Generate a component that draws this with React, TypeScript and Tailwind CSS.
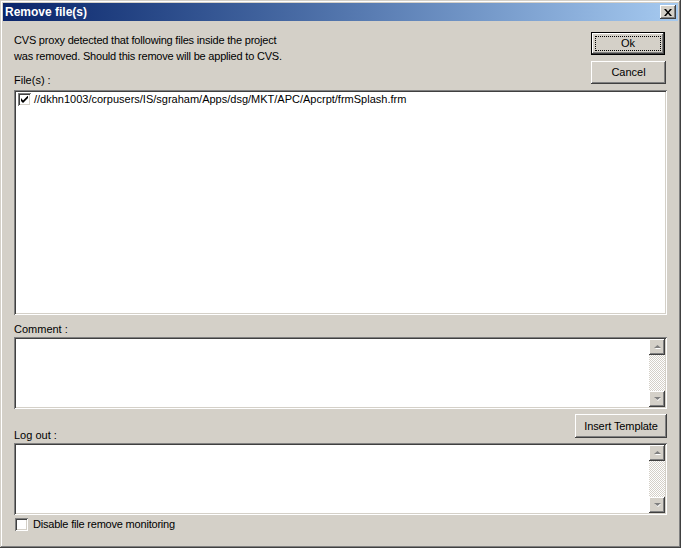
import React, { useState } from "react";

const font = "font-['Tahoma','Liberation_Sans',sans-serif]";

// classic 3D bevels done with stacked inset shadows
const raised =
  "bg-[#d4d0c8] shadow-[inset_-1px_-1px_#404040,inset_1px_1px_#fff,inset_-2px_-2px_#808080,inset_2px_2px_#d4d0c8]";
const sunken =
  "bg-white shadow-[inset_1px_1px_#808080,inset_-1px_-1px_#fff,inset_2px_2px_#404040,inset_-2px_-2px_#d4d0c8]";

const ArrowButton: React.FC<{ dir: "up" | "down" }> = ({ dir }) => (
  <div className={`w-[16px] h-[16px] flex items-center justify-center ${raised}`}>
    <svg width="7" height="4" viewBox="0 0 7 4">
      {dir === "up" ? (
        <>
          <path d="M1 4 L4 1 L7 4 Z" fill="#fff" />
          <path d="M0 3 L3.5 0 L7 3 Z" fill="#808080" />
        </>
      ) : (
        <>
          <path d="M1 1 L4 4 L7 1 Z" fill="#fff" />
          <path d="M0 0 L3.5 3 L7 0 Z" fill="#808080" />
        </>
      )}
    </svg>
  </div>
);

const TextArea: React.FC = () => (
  <div className={`h-[72px] p-[2px] flex ${sunken}`}>
    <div className="flex-1" />
    <div className="w-[16px] flex flex-col">
      <ArrowButton dir="up" />
      <div className="flex-1 bg-[repeating-conic-gradient(#fff_0_25%,#d4d0c8_0_50%)] bg-[length:2px_2px]" />
      <ArrowButton dir="down" />
    </div>
  </div>
);

const CheckBox: React.FC<{ checked: boolean; onToggle: () => void }> = ({ checked, onToggle }) => (
  <div
    onClick={onToggle}
    className={`w-[13px] h-[13px] shrink-0 flex items-center justify-center ${sunken}`}
  >
    {checked && (
      <svg width="7" height="7" viewBox="0 0 7 7">
        <path d="M0 2 L0 5 L2 7 L7 2 L7 -0.5 L2 4.5 Z" fill="#000" />
      </svg>
    )}
  </div>
);

const App: React.FC = () => {
  const [fileChecked, setFileChecked] = useState(true);
  const [disableMonitor, setDisableMonitor] = useState(false);

  return (
    <div
      className={`w-[681px] h-[548px] bg-[#d4d0c8] p-[3px] flex flex-col text-[11px] text-black ${font} shadow-[inset_-1px_-1px_#404040,inset_1px_1px_#d4d0c8,inset_-2px_-2px_#808080,inset_2px_2px_#fff]`}
    >
      {/* title bar */}
      <div className="h-[18px] flex items-center justify-between pl-[2px] pr-[2px] bg-gradient-to-r from-[#0a246a] to-[#a6caf0]">
        <span className="text-white font-bold text-[12px] leading-none">Remove file(s)</span>
        <div className={`w-[16px] h-[14px] flex items-center justify-center ${raised}`}>
          <svg width="8" height="7" viewBox="0 0 8 7">
            <path d="M0 0 H2 L4 2.5 L6 0 H8 L5 3.5 L8 7 H6 L4 4.5 L2 7 H0 L3 3.5 Z" fill="#000" />
          </svg>
        </div>
      </div>

      <div className="flex-1 pl-[11px] pr-[11px] flex flex-col">
        <div className="flex justify-between pt-[11px]">
          <div className="flex flex-col">
            <p className="leading-[16px] tracking-[-0.2px]">
              CVS proxy detected that following files inside the project
              <br />
              was removed. Should this remove will be applied to CVS.
            </p>
            <p className="leading-[16px] mt-[8px]">File(s) :</p>
          </div>
          <div className="flex flex-col gap-[6px] mr-[1px]">
            <button className="w-[74px] h-[23px] border border-black p-[3px] bg-[#d4d0c8] shadow-[inset_-1px_-1px_#404040,inset_1px_1px_#fff,inset_-2px_-2px_#808080]">
              <span className="w-full h-full flex items-center justify-center border border-dotted border-black">
                Ok
              </span>
            </button>
            <button className={`w-[75px] h-[23px] ${raised}`}>Cancel</button>
          </div>
        </div>

        <div className={`mt-[2px] h-[225px] pl-[4px] pt-[3px] ${sunken}`}>
          <div className="flex items-center gap-[3px] h-[13px]">
            <CheckBox checked={fileChecked} onToggle={() => setFileChecked(!fileChecked)} />
            <span className="leading-none">
              //dkhn1003/corpusers/IS/sgraham/Apps/dsg/MKT/APC/Apcrpt/frmSplash.frm
            </span>
          </div>
        </div>

        <p className="leading-[16px] mt-[6px]">Comment :</p>
        <TextArea />

        <div className="flex justify-between mt-[5px] h-[29px]">
          <p className="leading-[16px] self-end">Log out :</p>
          <button className={`w-[92px] h-[24px] tracking-[-0.1px] ${raised}`}>Insert Template</button>
        </div>
        <TextArea />

        <div className="flex items-center gap-[5px] mt-[3px] pl-[1px]">
          <CheckBox checked={disableMonitor} onToggle={() => setDisableMonitor(!disableMonitor)} />
          <span className="leading-[13px] tracking-[-0.2px]">Disable file remove monitoring</span>
        </div>
      </div>
    </div>
  );
};

export default App;
